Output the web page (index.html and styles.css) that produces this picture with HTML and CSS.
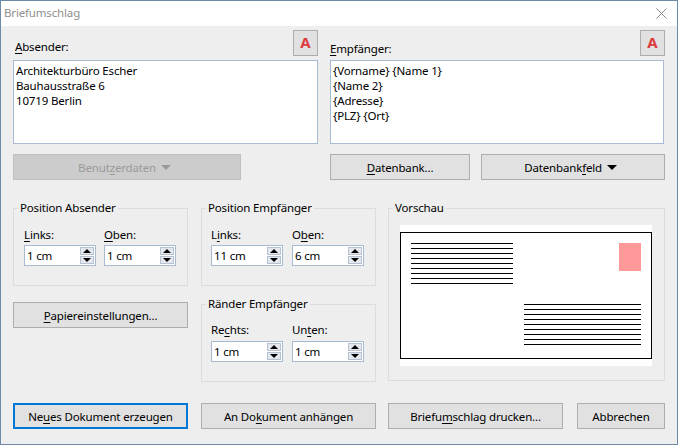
FILE: index.html
```html
<!DOCTYPE html>
<html lang="de">
<head>
<meta charset="utf-8">
<title>Briefumschlag</title>
<link rel="stylesheet" href="styles.css">
</head>
<body>
<div class="window">
  <header class="titlebar">
    <span class="title">Briefumschlag</span>
    <svg class="close" width="11" height="11" viewBox="0 0 11 11"><path d="M0.5 0.5L10.5 10.5M10.5 0.5L0.5 10.5" stroke="#8a8a8a" stroke-width="1" fill="none"/></svg>
  </header>
  <main class="content">
    <section class="addresses">
      <div class="addr addr-sender">
        <div class="addr-head">
          <span class="addr-label"><u>A</u>bsender:</span>
          <button class="font-btn">A</button>
        </div>
        <div class="textbox">Architekturbüro Escher<br>Bauhausstraße 6<br>10719 Berlin</div>
        <div class="addr-actions">
          <button class="btn btn-disabled btn-user">Benut<u>z</u>erdaten <span class="caret"></span></button>
        </div>
      </div>
      <div class="addr addr-recipient">
        <div class="addr-head">
          <span class="addr-label addr-label-low"><u>E</u>mpfänger:</span>
          <button class="font-btn">A</button>
        </div>
        <div class="textbox textbox-recipient">{Vorname} {Name 1}<br>{Name 2}<br>{Adresse}<br>{PLZ} {Ort}</div>
        <div class="addr-actions">
          <button class="btn btn-db"><u>D</u>atenbank...</button>
          <button class="btn btn-dbfield">Datenbank<u>f</u>eld <span class="caret"></span></button>
        </div>
      </div>
    </section>

    <section class="options">
      <div class="col">
        <div class="group group-sender">
          <span class="legend">Position Absender</span>
          <div class="fields">
            <div class="field"><span class="field-label"><u>L</u>inks:</span>
              <div class="spin"><span class="spin-value">1 cm</span><span class="spin-btns"><span class="up"></span><span class="down"></span></span></div></div>
            <div class="field"><span class="field-label"><u>O</u>ben:</span>
              <div class="spin"><span class="spin-value">1 cm</span><span class="spin-btns"><span class="up"></span><span class="down"></span></span></div></div>
          </div>
        </div>
        <button class="btn btn-paper"><u>P</u>apiereinstellungen...</button>
      </div>
      <div class="col col-mid">
        <div class="group">
          <span class="legend">Position Empfänger</span>
          <div class="fields fields-wide">
            <div class="field"><span class="field-label">L<u>i</u>nks:</span>
              <div class="spin"><span class="spin-value">11 cm</span><span class="spin-btns"><span class="up"></span><span class="down"></span></span></div></div>
            <div class="field"><span class="field-label">O<u>b</u>en:</span>
              <div class="spin"><span class="spin-value">6 cm</span><span class="spin-btns"><span class="up"></span><span class="down"></span></span></div></div>
          </div>
        </div>
        <div class="group group-margins">
          <span class="legend">Ränder Empfänger</span>
          <div class="fields fields-wide">
            <div class="field"><span class="field-label">Re<u>c</u>hts:</span>
              <div class="spin"><span class="spin-value">1 cm</span><span class="spin-btns"><span class="up"></span><span class="down"></span></span></div></div>
            <div class="field"><span class="field-label">Un<u>t</u>en:</span>
              <div class="spin"><span class="spin-value">1 cm</span><span class="spin-btns"><span class="up"></span><span class="down"></span></span></div></div>
          </div>
        </div>
      </div>
      <div class="group group-preview">
        <span class="legend">Vorschau</span>
        <svg class="preview" width="252" height="141" viewBox="0 0 252 141" shape-rendering="crispEdges">
          <rect width="252" height="141" fill="#fff"/>
          <rect x="0.5" y="7.5" width="251" height="126" fill="none" stroke="#000"/>
          <rect x="219" y="18" width="22" height="28" fill="#ff9999"/>
          <path stroke="#000" fill="none" d="M11 18.5H113M11 23.5H113M11 28.5H113M11 33.5H113M11 38.5H113M11 43.5H113M11 48.5H113M11 53.5H113M11 58.5H113"/>
          <path stroke="#000" fill="none" d="M124 79.5H241M124 84.5H241M124 89.5H241M124 94.5H241M124 99.5H241M124 104.5H241M124 109.5H241M124 114.5H241M124 119.5H241"/>
        </svg>
      </div>
    </section>

    <footer class="actions">
      <button class="btn btn-action btn-focus">Ne<u>u</u>es Dokument erzeugen</button>
      <button class="btn btn-action btn-after-1">An Do<u>k</u>ument anhängen</button>
      <button class="btn btn-action">Briefu<u>m</u>schlag drucken...</button>
      <button class="btn btn-cancel">Abbrechen</button>
    </footer>
  </main>
</div>
</body>
</html>
```
FILE: styles.css
```css
* { box-sizing: border-box; }
html, body { margin: 0; padding: 0; }
body {
  font-family: "Noto Sans", "Open Sans", sans-serif;
  font-size: 11.5px;
  letter-spacing: -0.16px;
  line-height: 15px;
  color: #000;
  background: #eee;
}
u { text-underline-offset: 2px; text-decoration-thickness: 1px; }
.window {
  width: 678px;
  height: 445px;
  border: 1px solid #6d8ba8;
  background: #eeeeee;
  display: flex;
  flex-direction: column;
  overflow: hidden;
}
.titlebar {
  height: 25px;
  flex: none;
  background: #fff;
  display: flex;
  align-items: center;
  justify-content: space-between;
  padding: 0 10px 0 3px;
}
.title { color: #8f8f8f; padding-bottom: 2px; }
.close { display: block; }
.content {
  flex: 1;
  padding: 4px 12px 0;
  display: flex;
  flex-direction: column;
}
.addresses { display: flex; gap: 12px; }
.addr-sender { width: 305px; }
.addr-recipient { width: 335px; }
.addr-head {
  height: 26px;
  display: flex;
  justify-content: space-between;
  align-items: flex-end;
  margin-bottom: 4px;
}
.addr-label { padding-bottom: 2px; margin-left: 2px; }
.addr-label-low { padding-bottom: 0; margin-left: 0; }
.font-btn {
  width: 25px;
  height: 26px;
  padding: 0 0 2px;
  background: #e1e1e1;
  border: 1px solid #adadad;
  color: #dd3a3f;
  font: bold 15px/1 "Noto Sans", sans-serif;
}
.textbox {
  height: 84px;
  background: #fff;
  border: 1px solid #a9bbd3;
  padding: 2px 2px;
}
.textbox-recipient { width: 334px; }
.addr-actions { display: flex; gap: 11px; margin-top: 10px; }
.btn {
  height: 26px;
  padding: 0;
  background: #e1e1e1;
  border: 1px solid #adadad;
  color: #000;
  font: inherit;
  letter-spacing: inherit;
  line-height: 15px;
}
.btn-disabled { background: #cccccc; border-color: #bfbfbf; color: #9a9a9a; }
.btn-user { width: 228px; padding-right: 5px; }
.btn-db { width: 140px; }
.btn-dbfield { width: 184px; padding-right: 5px; }
.caret {
  display: inline-block;
  width: 0;
  height: 0;
  margin-left: 2px;
  vertical-align: 2px;
  border-left: 5px solid transparent;
  border-right: 5px solid transparent;
  border-top: 5px solid currentColor;
}
.options { display: flex; gap: 13px; margin-top: 28px; }
.col { display: flex; flex-direction: column; width: 175px; }
.col-mid { gap: 18px; }
.col-mid + .group-preview { margin-left: -1px; }
.group {
  position: relative;
  width: 175px;
  height: 78px;
  border: 1px solid #dcdcdc;
  padding: 18px 0 0 9px;
}
.group-sender { padding-left: 10px; }
.legend {
  position: absolute;
  top: -9px;
  left: 4px;
  padding: 0 2px;
  background: #eee;
}
.fields { display: flex; gap: 8px; }
.fields-wide { gap: 9px; }
.field { width: 72px; }
.field-label { display: block; height: 18px; }
.group-margins .field-label { margin-top: -1px; height: 19px; }
.spin {
  height: 21px;
  width: 72px;
  background: #fff;
  border: 1px solid #a9bbd3;
  display: flex;
  justify-content: space-between;
  align-items: center;
  padding: 0 1px 0 2px;
}
.spin-btns { display: flex; flex-direction: column; gap: 1px; }
.up, .down {
  display: flex;
  align-items: center;
  justify-content: center;
  width: 14px;
  height: 8px;
  background: #e4e8ee;
  border: 1px solid #b6c2d2;
}
.up::before, .down::before {
  content: "";
  width: 0;
  height: 0;
  border-left: 4px solid transparent;
  border-right: 4px solid transparent;
}
.up::before { border-bottom: 4px solid #000; }
.down::before { border-top: 4px solid #000; }
.btn-paper { width: 175px; margin-top: 16px; }
.group-preview {
  width: 277px;
  height: 173px;
  padding: 16px 0 0 11px;
}
.preview { display: block; }
.actions { display: flex; gap: 13px; margin-top: 21px; }
.btn-action { width: 175px; }
.btn-focus { border: 2px solid #0078d7; }
.btn-after-1 { margin-right: -1px; }
.btn-cancel { width: 88px; margin-left: 1px; }
```
